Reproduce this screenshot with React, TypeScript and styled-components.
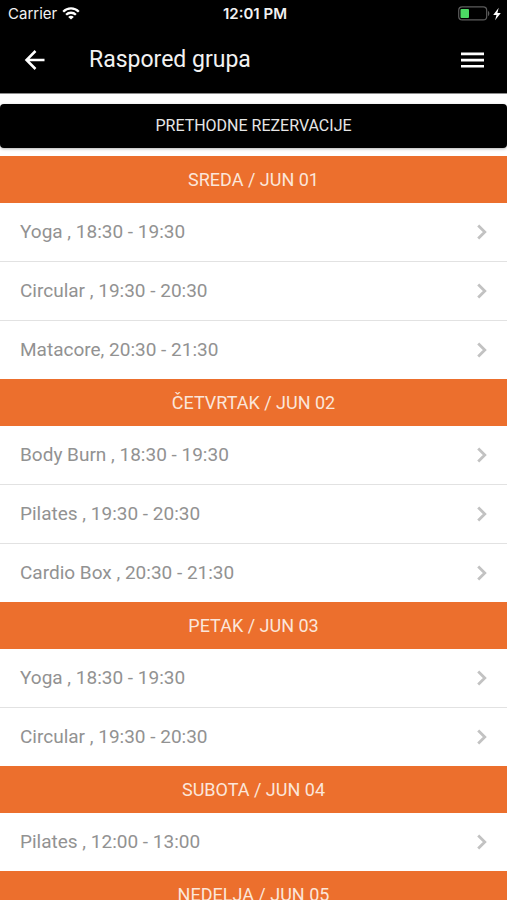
import React from "react";
import styled, { createGlobalStyle } from "styled-components";

const GlobalStyle = createGlobalStyle`
  * { box-sizing: border-box; }
  body {
    margin: 0;
    background: #fff;
    font-family: Roboto, "Open Sans", sans-serif;
  }
`;

const Screen = styled.div`
  display: flex;
  flex-direction: column;
  height: 100vh;
  background: #fff;
`;

const TopArea = styled.header`
  flex: none;
  background: #000;
  color: #f2f2f2;
  border-bottom: 1px solid #8c8c8c;
`;

const StatusBar = styled.div`
  display: grid;
  grid-template-columns: 1fr auto 1fr;
  align-items: center;
  height: 27px;
  padding: 0 5px 0 8px;
  font-family: Inter, "Liberation Sans", sans-serif;
  font-size: 15px;
  line-height: 27px;
`;

const StatusSide = styled.div<{ $end?: boolean }>`
  display: flex;
  align-items: center;
  gap: ${({ $end }) => ($end ? 2 : 5)}px;
  justify-content: ${({ $end }) => ($end ? "flex-end" : "flex-start")};
`;

const Clock = styled.time`
  font-weight: 600;
`;

const Toolbar = styled.div`
  display: flex;
  align-items: center;
  height: 66px;
  padding: 0 16px;
`;

const IconButton = styled.button`
  display: flex;
  align-items: center;
  justify-content: center;
  width: 38px;
  height: 44px;
  padding: 0;
  border: 0;
  background: none;
  color: #fff;
  cursor: pointer;
`;

const Title = styled.h1`
  flex: 1;
  margin: 0;
  padding-left: 35px;
  font-size: 23px;
  line-height: 32px;
  font-weight: 400;
`;

const Content = styled.main`
  flex: 1;
  min-height: 0;
  overflow-y: auto;
  scrollbar-width: none;
`;

const HistoryButton = styled.button`
  display: block;
  width: 100%;
  height: 44px;
  margin: 10px 0 8px;
  padding: 0;
  border: 0;
  border-radius: 4px;
  background: #000;
  color: #e6e6e6;
  font: 400 16px/44px Roboto, "Open Sans", sans-serif;
  text-align: center;
  box-shadow: 0 1px 3px rgba(0, 0, 0, 0.3);
  cursor: pointer;
`;

const DayHeading = styled.h2`
  margin: 0;
  height: 47px;
  background: #ec6f2d;
  color: #fbe6da;
  font-size: 18px;
  line-height: 48px;
  font-weight: 400;
  text-align: center;
`;

const ClassList = styled.ul`
  margin: 0;
  padding: 0;
  list-style: none;
`;

const ClassItem = styled.li`
  & + & {
    border-top: 1px solid #e2e2e2;
  }
`;

const ClassLink = styled.a`
  display: flex;
  align-items: center;
  justify-content: space-between;
  height: 58px;
  padding: 0 19px 0 20px;
  color: #929292;
  font-size: 19px;
  line-height: 24px;
  text-decoration: none;
`;

const WifiIcon = () => (
  <svg width="18" height="13" viewBox="0 0 18 13" fill="none" stroke="#fff" strokeWidth="2.3" aria-hidden="true">
    <path d="M1.2 4.7a11 11 0 0 1 15.6 0" />
    <path d="M4.1 7.8a6.9 6.9 0 0 1 9.8 0" />
    <path d="M9 12.6 6.2 9.9a3.9 3.9 0 0 1 5.6 0z" fill="#fff" stroke="none" />
  </svg>
);

const BatteryIcon = () => (
  <svg width="32" height="15" viewBox="0 0 32 15" aria-hidden="true">
    <rect x="0.7" y="0.9" width="28" height="13" rx="3.5" fill="none" stroke="#5c5c5c" strokeWidth="1.2" />
    <rect x="2.5" y="3" width="8.5" height="9" rx="1" fill="#4cd964" />
    <path d="M30 5v5c1.8-.6 1.8-4.4 0-5z" fill="#5c5c5c" />
  </svg>
);

const BoltIcon = () => (
  <svg width="10" height="14" viewBox="0 0 10 14" aria-hidden="true">
    <path d="M6.7.8 1.2 8h3.3L3.1 13.3 8.8 5.9H5.4z" fill="#fff" />
  </svg>
);

const BackIcon = () => (
  <svg width="22" height="22" viewBox="0 0 22 22" fill="none" stroke="currentColor" strokeWidth="2.5" aria-hidden="true">
    <path d="M20.5 11H2.5M11.5 2 2.5 11l9 9" />
  </svg>
);

const MenuIcon = () => (
  <svg width="24" height="18" viewBox="0 0 24 18" fill="currentColor" aria-hidden="true">
    <path d="M1 1.5h23v2.7H1zM1 7.7h23v2.7H1zM1 13.9h23v2.7H1z" />
  </svg>
);

const ChevronIcon = () => (
  <svg width="12" height="18" viewBox="0 0 12 18" fill="none" stroke="#c2c2c2" strokeWidth="2.8" aria-hidden="true">
    <path d="M2.2 2.4 8.8 9l-6.6 6.6" />
  </svg>
);

const schedule = [
  { day: "SREDA / JUN 01", classes: ["Yoga , 18:30 - 19:30", "Circular , 19:30 - 20:30", "Matacore, 20:30 - 21:30"] },
  { day: "ČETVRTAK / JUN 02", classes: ["Body Burn , 18:30 - 19:30", "Pilates , 19:30 - 20:30", "Cardio Box , 20:30 - 21:30"] },
  { day: "PETAK / JUN 03", classes: ["Yoga , 18:30 - 19:30", "Circular , 19:30 - 20:30"] },
  { day: "SUBOTA / JUN 04", classes: ["Pilates , 12:00 - 13:00"] },
  { day: "NEDELJA / JUN 05", classes: [] },
];

export default function App() {
  return (
    <Screen>
      <GlobalStyle />
      <TopArea>
        <StatusBar>
          <StatusSide>
            Carrier
            <WifiIcon />
          </StatusSide>
          <Clock>12:01 PM</Clock>
          <StatusSide $end>
            <BatteryIcon />
            <BoltIcon />
          </StatusSide>
        </StatusBar>
        <Toolbar>
          <IconButton aria-label="Nazad">
            <BackIcon />
          </IconButton>
          <Title>Raspored grupa</Title>
          <IconButton aria-label="Meni">
            <MenuIcon />
          </IconButton>
        </Toolbar>
      </TopArea>
      <Content>
        <HistoryButton>PRETHODNE REZERVACIJE</HistoryButton>
        {schedule.map(({ day, classes }) => (
          <section key={day}>
            <DayHeading>{day}</DayHeading>
            <ClassList>
              {classes.map((label) => (
                <ClassItem key={label}>
                  <ClassLink href="#">
                    {label}
                    <ChevronIcon />
                  </ClassLink>
                </ClassItem>
              ))}
            </ClassList>
          </section>
        ))}
      </Content>
    </Screen>
  );
}
